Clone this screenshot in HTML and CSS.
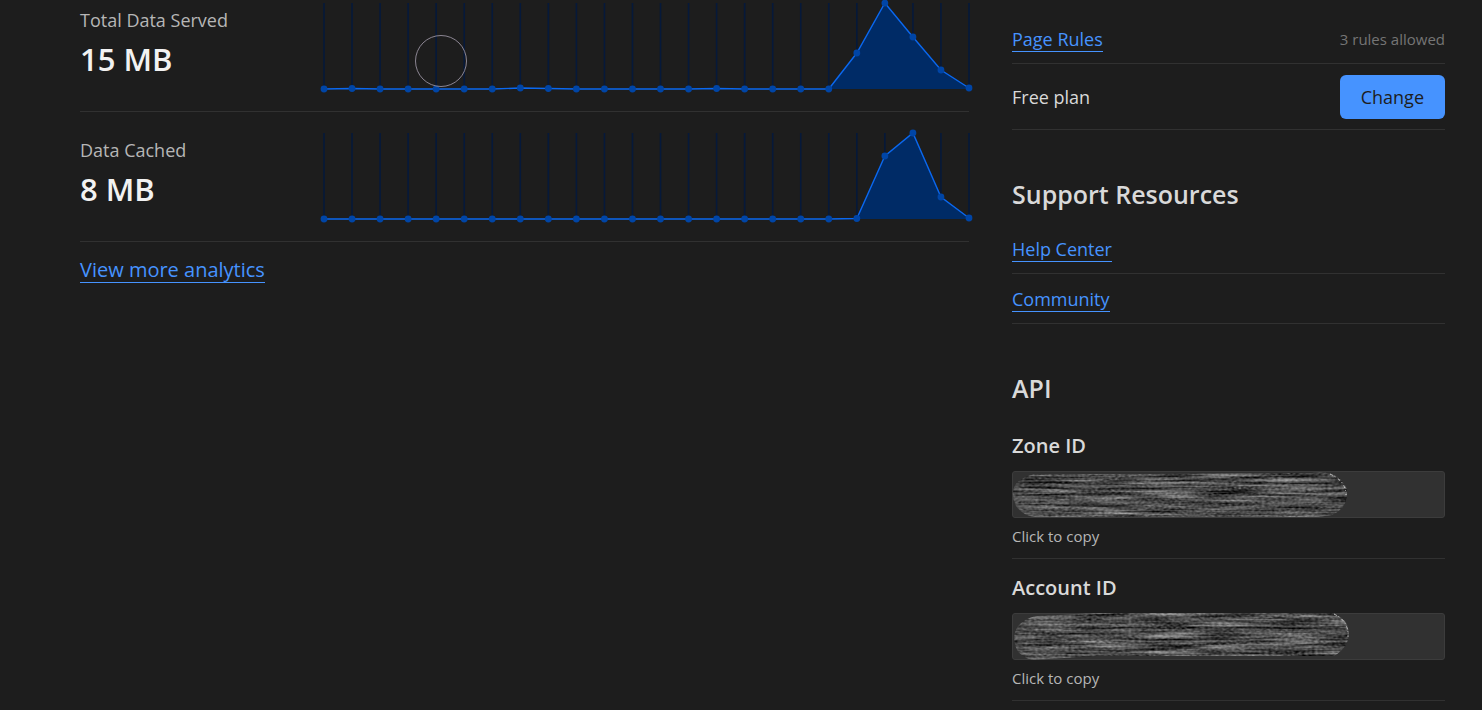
FILE: index.html
```html
<!DOCTYPE html>
<html lang="en">
<head>
<meta charset="utf-8">
<title>Overview</title>
<link rel="stylesheet" href="styles.css">
</head>
<body>
<main class="page">
  <section class="analytics">
    <article class="metric metric-first">
      <div class="metric-text">
        <span class="metric-label">Total Data Served</span>
        <strong class="metric-value">15 MB</strong>
      </div>
      <svg class="chart" viewBox="0 0 645 93" data-values="89,88.5,89,89,89,89,89,88,88.5,89,89,89,89,89,88.5,89,89,89,89,53,3,37,70,88" role="img" aria-label="Total data served"></svg>
    </article>
    <article class="metric">
      <div class="metric-text">
        <span class="metric-label">Data Cached</span>
        <strong class="metric-value">8 MB</strong>
      </div>
      <svg class="chart" viewBox="0 0 645 93" data-values="89,89,89,89,89,89,89,89,89,89,89,89,89,89,89,89,89,89,89,88.5,26,3,67,88" role="img" aria-label="Data cached"></svg>
    </article>
    <a class="link more" href="#analytics">View more analytics</a>
  </section>
  <aside class="side">
    <section class="group">
      <div class="row"><a class="link" href="#rules">Page Rules</a><span class="note">3 rules allowed</span></div>
      <div class="row row-plan"><span>Free plan</span><button class="button" type="button">Change</button></div>
    </section>
    <section class="group">
      <h2 class="heading">Support Resources</h2>
      <div class="row"><a class="link" href="#help">Help Center</a></div>
      <div class="row"><a class="link" href="#community">Community</a></div>
    </section>
    <section class="group">
      <h2 class="heading">API</h2>
      <div class="field">
        <label class="field-label" for="zone">Zone ID</label>
        <div class="field-box">
          <input class="field-input" id="zone" readonly>
          <svg class="mask" viewBox="0 0 433 47" aria-hidden="true">
            <defs>
              <filter id="grain-a" x="0" y="0" width="100%" height="100%" color-interpolation-filters="sRGB">
                <feTurbulence type="fractalNoise" baseFrequency="0.016 0.36" numOctaves="2" seed="4" result="long"/>
                <feTurbulence type="fractalNoise" baseFrequency="0.3 0.5" numOctaves="1" seed="9" result="fine"/>
                <feComposite in="long" in2="fine" operator="arithmetic" k2="0.65" k3="0.35"/>
                <feColorMatrix values="1.1 0 0 0 -0.25  1.1 0 0 0 -0.25  1.1 0 0 0 -0.25  0 0 0 0 1"/>
                <feComposite in2="SourceGraphic" operator="in"/>
              </filter>
            </defs>
            <path filter="url(#grain-a)" d="M22 3H120L300 2Q318 0 327 7Q336 14 335 24Q334 38 320 44L306 46H22Q10 44 4 35Q0 28 1 20Q3 8 22 3Z"/>
            <path class="edge" d="M318 3Q334 10 334 24"/>
          </svg>
        </div>
        <span class="hint">Click to copy</span>
      </div>
      <div class="field">
        <label class="field-label" for="account">Account ID</label>
        <div class="field-box">
          <input class="field-input" id="account" readonly>
          <svg class="mask" viewBox="0 0 433 47" aria-hidden="true">
            <defs>
              <filter id="grain-b" x="0" y="0" width="100%" height="100%" color-interpolation-filters="sRGB">
                <feTurbulence type="fractalNoise" baseFrequency="0.016 0.36" numOctaves="2" seed="17" result="long"/>
                <feTurbulence type="fractalNoise" baseFrequency="0.3 0.5" numOctaves="1" seed="23" result="fine"/>
                <feComposite in="long" in2="fine" operator="arithmetic" k2="0.65" k3="0.35"/>
                <feColorMatrix values="1.1 0 0 0 -0.25  1.1 0 0 0 -0.25  1.1 0 0 0 -0.25  0 0 0 0 1"/>
                <feComposite in2="SourceGraphic" operator="in"/>
              </filter>
            </defs>
            <path filter="url(#grain-b)" d="M26 3L84 0H320Q336 5 337 20Q337 34 322 43H85L20 47Q5 43 3 31Q0 18 9 10Q16 4 26 3Z"/>
            <path class="edge" d="M322 1Q337 8 336 24"/>
          </svg>
        </div>
        <span class="hint">Click to copy</span>
      </div>
    </section>
  </aside>
</main>
<div class="pointer-ring" aria-hidden="true"></div>
<script src="chart.js"></script>
</body>
</html>
```
FILE: styles.css
```css
* { box-sizing: border-box; }

body {
  margin: 0;
  background: #1d1d1d;
  color: #d9d9d9;
  font-family: "Segoe UI", "Open Sans", "Noto Sans", sans-serif;
  font-size: 18px;
  line-height: 26px;
}

.page {
  display: grid;
  grid-template-columns: 889fr 433fr;
  column-gap: 43px;
  padding: 0 37px 0 80px;
}

.metric {
  display: grid;
  grid-template-columns: 244px minmax(0, 1fr);
  padding: 18px 0;
  border-bottom: 1px solid #313131;
}
.metric-first { padding-top: 0; }
.metric-text {
  display: flex;
  flex-direction: column;
  gap: 6px;
  padding-top: 7px;
}
.metric-label { color: #b6b6b6; }
.metric-value {
  color: #f2f2f2;
  font-size: 31px;
  font-weight: 600;
  line-height: 40px;
}

.chart { display: block; width: 100%; overflow: visible; }
.chart-grid { stroke: #06193a; stroke-width: 1.6; }
.chart-area { fill: #002b66; }
.chart-line { fill: none; stroke: #0a68f0; stroke-width: 1.4; }
.chart-dot { fill: #0045a6; }

.link {
  color: #4693ff;
  text-decoration: none;
  line-height: 24px;
  border-bottom: 1px solid #4693ff;
}
.row .link { margin-top: 2px; }
.more { display: inline-block; margin-top: 16px; font-size: 20px; }

.group { padding-bottom: 48px; }
.group:last-child { padding-bottom: 0; }
.row {
  display: flex;
  align-items: center;
  justify-content: space-between;
  min-height: 50px;
  border-bottom: 1px solid #313131;
}
.side { padding-top: 14px; }
.row-plan { min-height: 66px; }
.note { color: #757575; font-size: 15px; }
.button {
  padding: 0 21px;
  border: 0;
  border-radius: 6px;
  background: #4693ff;
  color: #1d1d1d;
  font: inherit;
  line-height: 44px;
}

.heading {
  margin: 0;
  padding-bottom: 14px;
  font-size: 25px;
  font-weight: 600;
  line-height: 32px;
}

.field {
  display: flex;
  flex-direction: column;
  padding: 12px 0 9px;
  border-bottom: 1px solid #313131;
}
.field + .field { padding-top: 13px; }
.field-label {
  margin-bottom: 9px;
  font-size: 20px;
  font-weight: 600;
  line-height: 32px;
}
.field-box { position: relative; }
.field-input {
  display: block;
  width: 100%;
  height: 47px;
  border: 1px solid #3c3c3c;
  border-radius: 3px;
  background: #313131;
}
.mask { position: absolute; inset: 0; width: 100%; height: 100%; }
.edge { fill: none; stroke: #c8c8c8; stroke-width: 1; stroke-dasharray: 3 2 1 3; }
.hint { padding-top: 5px; color: #b6b6b6; font-size: 15px; }

.pointer-ring {
  position: absolute;
  top: 35px;
  left: 415px;
  width: 52px;
  height: 52px;
  border: 1px solid #8b8592;
  border-radius: 50%;
}
```
FILE: chart.js
```javascript
document.querySelectorAll('.chart').forEach(function (chart) {
  var values = chart.dataset.values.split(',').map(Number);
  var step = 645 / (values.length - 1);
  var points = values.map(function (y, i) { return [(i * step).toFixed(2), y]; });
  var line = points.map(function (p) { return p.join(' '); }).join(' L');
  var grid = points.map(function (p) { return 'M' + p[0] + ' 3V89'; }).join('');
  var dots = points.map(function (p) {
    return '<circle class="chart-dot" cx="' + p[0] + '" cy="' + p[1] + '" r="3.4"/>';
  }).join('');
  chart.innerHTML = '<path class="chart-grid" d="' + grid + '"/>' +
    '<path class="chart-area" d="M0 89 L' + line + ' L645 89Z"/>' +
    '<path class="chart-line" d="M' + line + '"/>' + dots;
});
```
